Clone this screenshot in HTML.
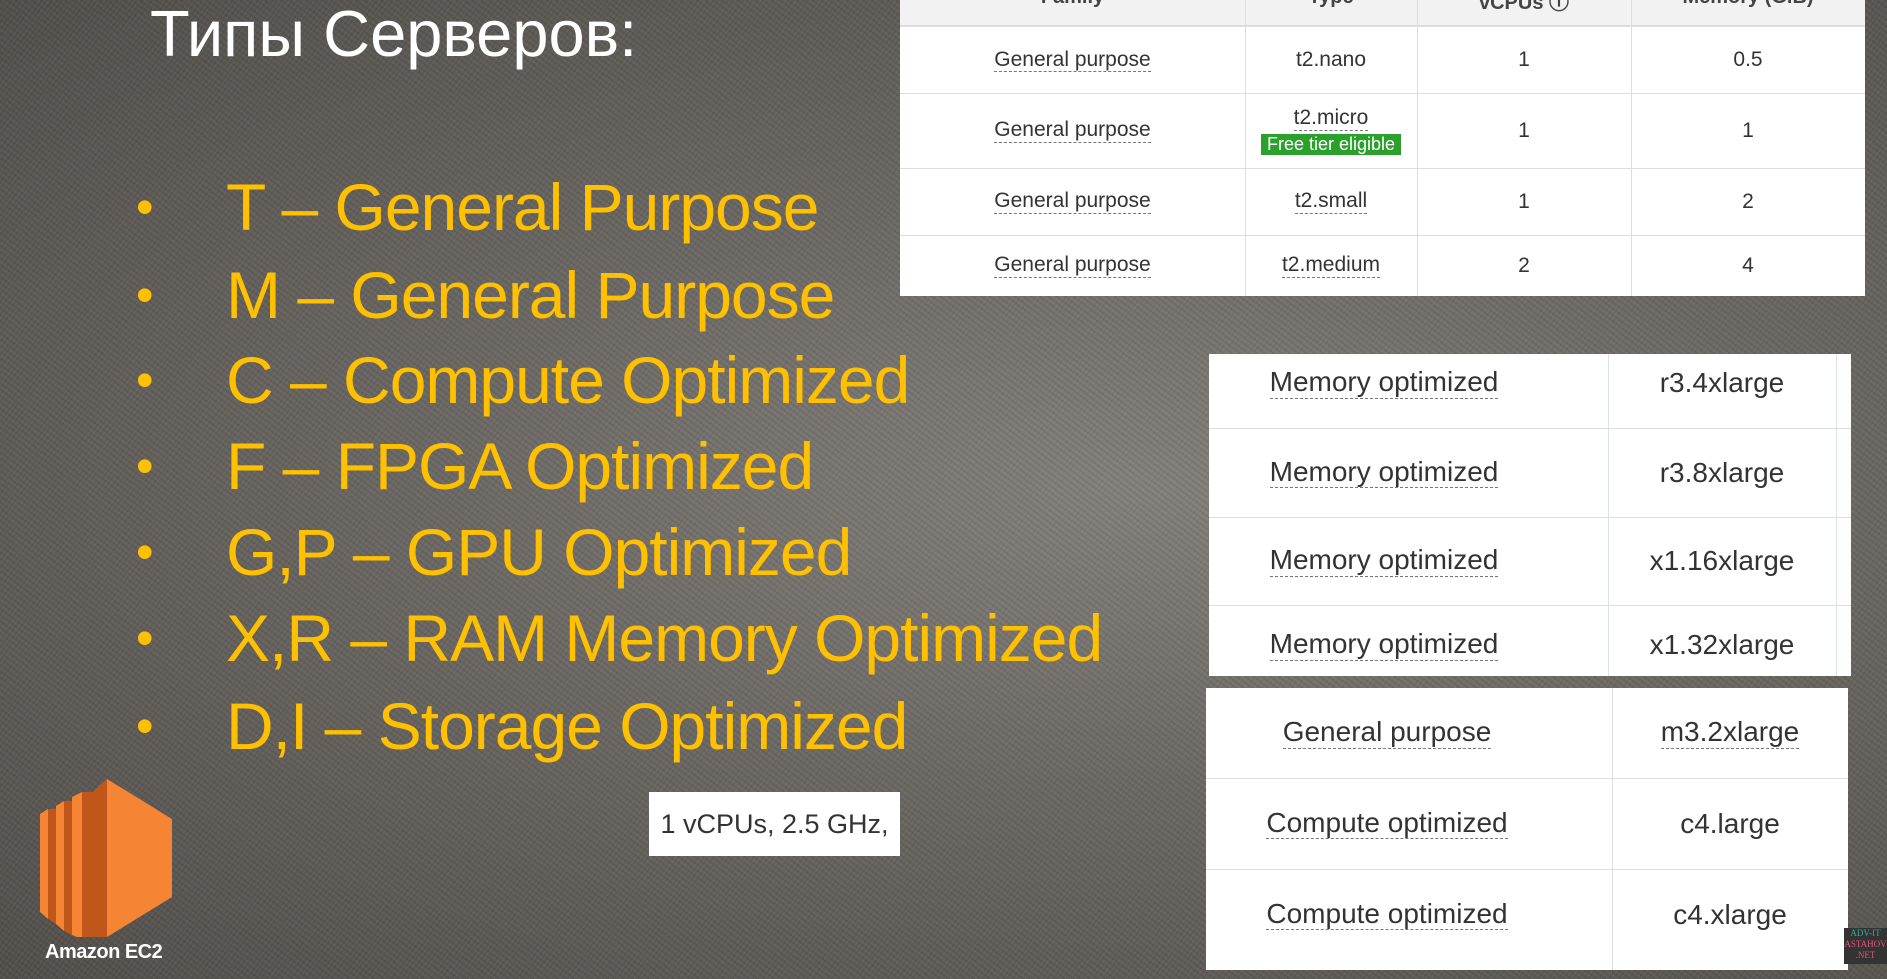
<!DOCTYPE html>
<html><head><meta charset="utf-8"><style>
*{margin:0;padding:0;box-sizing:border-box}
body{width:1887px;height:979px;overflow:hidden;position:relative;font-family:"Liberation Sans",sans-serif;
background:radial-gradient(ellipse at 60% 50%,#85817c 0%,#6c6864 45%,#53504c 100%);}
.tex{position:absolute;inset:0;background-image:repeating-linear-gradient(37deg,rgba(0,0,0,.08) 0 2px,transparent 2px 5px),repeating-linear-gradient(-53deg,rgba(255,255,255,.05) 0 1px,transparent 1px 4px);}
.title{position:absolute;left:150px;top:-4px;font-size:65px;color:#fff;font-family:"Liberation Sans","DejaVu Sans",sans-serif;}
.b{position:absolute;left:136px;color:#ffc000;font-size:66px;white-space:nowrap;line-height:80px;letter-spacing:-1px}
.b span{position:absolute;left:0;font-size:50px}
.b i{font-style:normal;position:absolute;left:90px}
.t{position:absolute;background:#fff;color:#333}
.cell{position:absolute;display:flex;align-items:center;justify-content:center;flex-direction:column}
.u{border-bottom:1px dashed #777;line-height:1.1}
.hl{position:absolute;background:#ddd}
.h{position:absolute;top:-14px;font-weight:bold;font-size:20px;color:#444;text-align:center}
</style></head><body>
<div class="tex"></div>
<div class="title">Типы Серверов:</div>
<div class="b" style="top:167px"><span>•</span><i>T – General Purpose</i></div>
<div class="b" style="top:255px"><span>•</span><i>M – General Purpose</i></div>
<div class="b" style="top:340px"><span>•</span><i>C – Compute Optimized</i></div>
<div class="b" style="top:426px"><span>•</span><i>F – FPGA Optimized</i></div>
<div class="b" style="top:512px"><span>•</span><i>G,P – GPU Optimized</i></div>
<div class="b" style="top:598px"><span>•</span><i>X,R – RAM Memory Optimized</i></div>
<div class="b" style="top:686px"><span>•</span><i>D,I – Storage Optimized</i></div>

<!-- table 1 -->
<div class="t" style="left:900px;top:0;width:965px;height:296px;font-size:21px;overflow:hidden">
 <div style="position:absolute;left:0;top:0;width:965px;height:27px;background:#f2f2f2;border-bottom:2px solid #ddd"></div>
 <div class="h" style="left:0;width:345px">Family</div>
 <div class="h" style="left:345px;width:172px">Type</div>
 <div class="h" style="left:517px;width:214px">vCPUs ⓘ</div>
 <div class="h" style="left:731px;width:234px">Memory (GiB)</div>
 <div class="hl" style="left:345px;top:0;width:1px;height:296px"></div>
 <div class="hl" style="left:517px;top:0;width:1px;height:296px"></div>
 <div class="hl" style="left:731px;top:0;width:1px;height:296px"></div>
 <div class="hl" style="left:0;top:93px;width:965px;height:1px"></div>
 <div class="hl" style="left:0;top:168px;width:965px;height:1px"></div>
 <div class="hl" style="left:0;top:235px;width:965px;height:1px"></div>
 <div class="cell" style="left:0;top:27px;width:345px;height:66px"><span class="u">General purpose</span></div>
 <div class="cell" style="left:345px;top:27px;width:172px;height:66px">t2.nano</div>
 <div class="cell" style="left:517px;top:27px;width:214px;height:66px">1</div>
 <div class="cell" style="left:731px;top:27px;width:234px;height:66px">0.5</div>
 <div class="cell" style="left:0;top:93px;width:345px;height:75px"><span class="u">General purpose</span></div>
 <div class="cell" style="left:345px;top:93px;width:172px;height:75px"><span class="u">t2.micro</span><span style="background:#2ca02c;color:#fff;padding:0 6px;font-size:18px;margin-top:3px">Free tier eligible</span></div>
 <div class="cell" style="left:517px;top:93px;width:214px;height:75px">1</div>
 <div class="cell" style="left:731px;top:93px;width:234px;height:75px">1</div>
 <div class="cell" style="left:0;top:168px;width:345px;height:67px"><span class="u">General purpose</span></div>
 <div class="cell" style="left:345px;top:168px;width:172px;height:67px"><span class="u">t2.small</span></div>
 <div class="cell" style="left:517px;top:168px;width:214px;height:67px">1</div>
 <div class="cell" style="left:731px;top:168px;width:234px;height:67px">2</div>
 <div class="cell" style="left:0;top:235px;width:345px;height:61px"><span class="u">General purpose</span></div>
 <div class="cell" style="left:345px;top:235px;width:172px;height:61px"><span class="u">t2.medium</span></div>
 <div class="cell" style="left:517px;top:235px;width:214px;height:61px">2</div>
 <div class="cell" style="left:731px;top:235px;width:234px;height:61px">4</div>
</div>

<!-- table 2 -->
<div class="t" style="left:1209px;top:354px;width:642px;height:322px;font-size:28px">
 <div class="hl" style="left:399px;top:0;width:1px;height:322px;background:#dde3ea"></div>
 <div class="hl" style="left:627px;top:0;width:1px;height:322px;background:#dde3ea"></div>
 <div class="hl" style="left:0;top:74px;width:642px;height:1px"></div>
 <div class="hl" style="left:0;top:163px;width:642px;height:1px"></div>
 <div class="hl" style="left:0;top:251px;width:642px;height:1px"></div>
 <div class="cell" style="left:0;top:-8px;width:350px;height:74px"><span class="u">Memory optimized</span></div>
 <div class="cell" style="left:399px;top:-8px;width:228px;height:74px">r3.4xlarge</div>
 <div class="cell" style="left:0;top:74px;width:350px;height:89px"><span class="u">Memory optimized</span></div>
 <div class="cell" style="left:399px;top:74px;width:228px;height:89px">r3.8xlarge</div>
 <div class="cell" style="left:0;top:163px;width:350px;height:88px"><span class="u">Memory optimized</span></div>
 <div class="cell" style="left:399px;top:163px;width:228px;height:88px">x1.16xlarge</div>
 <div class="cell" style="left:0;top:251px;width:350px;height:80px"><span class="u">Memory optimized</span></div>
 <div class="cell" style="left:399px;top:251px;width:228px;height:80px">x1.32xlarge</div>
</div>

<!-- table 3 -->
<div class="t" style="left:1206px;top:688px;width:642px;height:282px;font-size:28px">
 <div class="hl" style="left:406px;top:0;width:1px;height:282px"></div>
 <div class="hl" style="left:0;top:90px;width:642px;height:1px"></div>
 <div class="hl" style="left:0;top:181px;width:642px;height:1px"></div>
 <div class="cell" style="left:0;top:0;width:362px;height:90px"><span class="u">General purpose</span></div>
 <div class="cell" style="left:406px;top:0;width:236px;height:90px"><span class="u">m3.2xlarge</span></div>
 <div class="cell" style="left:0;top:90px;width:362px;height:91px"><span class="u">Compute optimized</span></div>
 <div class="cell" style="left:406px;top:90px;width:236px;height:91px">c4.large</div>
 <div class="cell" style="left:0;top:181px;width:362px;height:91px"><span class="u">Compute optimized</span></div>
 <div class="cell" style="left:406px;top:181px;width:236px;height:91px">c4.xlarge</div>
</div>
<div style="position:absolute;left:1844px;top:928px;width:43px;height:36px;background:#333;color:#e0557a;font-size:9px;line-height:11px;text-align:center;font-family:'Liberation Serif',serif"><span style="color:#3a9">ADV-IT</span><br>ASTAHOV<br>.NET</div>

<!-- EC2 logo -->
<svg style="position:absolute;left:38px;top:779px" width="136" height="158" viewBox="0 0 136 158">
 <polygon points="2,35 10,30 10,140 2,133" fill="#f58534"/>
 <polygon points="10,30 18,30 18,145 10,140" fill="#c1561b"/>
 <polygon points="18,27 26,22 26,152 18,145" fill="#f58534"/>
 <polygon points="26,22 34,22 34,156 26,152" fill="#c1561b"/>
 <polygon points="34,18 44,13 44,160 34,156" fill="#f58534"/>
 <polygon points="44,13 55,13 55,160 44,160" fill="#c1561b"/>
 <polygon points="55,13 69,0 134,40 134,118 69,158 55,160" fill="#f58534"/>
 <polygon points="55,13 69,0 69,158 55,160" fill="#c1561b"/>
</svg>
<div style="position:absolute;left:45px;top:941px;color:#fff;font-weight:bold;font-size:20px;letter-spacing:-0.5px">Amazon EC2</div>

<div style="position:absolute;left:649px;top:792px;width:251px;height:64px;background:#fff;color:#333;font-size:27px;display:flex;align-items:center;justify-content:center">1 vCPUs, 2.5 GHz,</div>
</body></html>
